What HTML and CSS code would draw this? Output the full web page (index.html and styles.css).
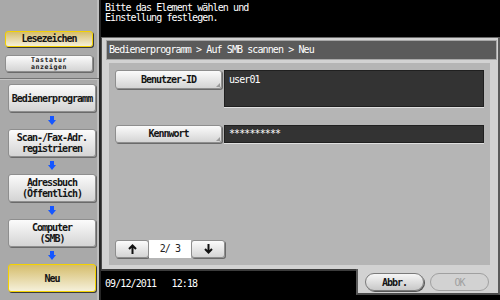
FILE: index.html
```html
<!DOCTYPE html>
<html lang="de">
<head>
	<meta charset="utf-8" />
	<title>Auf SMB scannen - Neu</title>
	<link rel="stylesheet" href="styles.css">
</head>
<body>
	<div class="screen">
		<aside class="side">
			<div class="side-top">
				<button class="btn hot mark">Lesezeichen</button>
				<button class="btn kbd">Tastatur<br/>anzeigen</button>
			</div>
			<div class="flow">
				<button class="btn step">Bedienerprogramm</button>
				<svg class="down" viewBox="0 0 8 9"><path d="M2 0h4v4h2L4 9L0 4h2z"/></svg>
				<button class="btn step">Scan-/Fax-Adr.<br/>registrieren</button>
				<svg class="down" viewBox="0 0 8 9"><path d="M2 0h4v4h2L4 9L0 4h2z"/></svg>
				<button class="btn step">Adressbuch<br/>(Öffentlich)</button>
				<svg class="down" viewBox="0 0 8 9"><path d="M2 0h4v4h2L4 9L0 4h2z"/></svg>
				<button class="btn step">Computer<br/>(SMB)</button>
				<svg class="down" viewBox="0 0 8 9"><path d="M2 0h4v4h2L4 9L0 4h2z"/></svg>
				<button class="btn step hot">Neu</button>
			</div>
		</aside>

		<main class="work">
			<div class="msg">Bitte das Element wählen und<br/>Einstellung festlegen.</div>

			<section class="panel">
				<div class="crumb">Bedienerprogramm &gt; Auf SMB scannen &gt; Neu</div>
				<div class="content">
					<div class="row">
						<button class="btn key">Benutzer-ID</button>
						<div class="field tall">user01</div>
					</div>
					<div class="row pw">
						<button class="btn key">Kennwort</button>
						<div class="field">**********</div>
					</div>
					<div class="pager">
						<button class="btn pg">
							<svg viewBox="0 0 9 10"><path d="M4.5 1.5V10M1 5l3.5-3.5L8 5"/></svg>
						</button>
						<span class="page">2/ 3</span>
						<button class="btn pg">
							<svg viewBox="0 0 9 10"><path d="M4.5 0v8.5M1 5l3.5 3.5L8 5"/></svg>
						</button>
					</div>
				</div>
			</section>

			<div class="foot">
				<div class="status">09/12/2011&nbsp;&nbsp;&nbsp;12:18</div>
				<div class="actions">
					<button class="pill">Abbr.</button>
					<button class="pill off">OK</button>
				</div>
			</div>
		</main>
	</div>
</body>
</html>
```

FILE: styles.css
```css
body
{
	margin: 0;
	background-color: black;
	font-family: "DejaVu Sans Mono", monospace;
}

.screen
{
	display: grid;
	grid-template-columns: 101px 1fr;
	width: 500px;
	height: 300px;
	overflow: hidden;
}

/* left column */

.side
{
	background-color: #a9a9a9;
	border-right: 2px solid #262626;
	box-shadow: inset -2px 0 #bebebe;
	display: flex;
	flex-direction: column;
}

.side-top
{
	height: 47px;
	padding-top: 31px;
	display: flex;
	flex-direction: column;
	gap: 8px;
	border-bottom: 1px solid #747474;
}

.flow
{
	border-top: 1px solid #c4c4c4;
	padding-top: 4px;
	display: flex;
	flex-direction: column;
	align-items: center;
}

.btn
{
	font-family: "DejaVu Sans Mono", monospace;
	font-weight: bold;
	font-size: 10px;
	line-height: 10px;
	letter-spacing: -1px;
	color: #151515;
	background: linear-gradient(#fbfbfb, #d4d4d4);
	border: 1px solid #8e8e8e;
	border-radius: 3px;
	box-shadow: 1px 1px 0 #6a6a6a;
	padding: 0;
	margin: 0;
}

.side .btn
{
	width: 88px;
	margin-left: 5px;
}

.mark
{
	height: 16px;
}

.kbd
{
	height: 17px;
	font-size: 6.5px;
	line-height: 7px;
	letter-spacing: 0.6px;
}

.step
{
	height: 28px;
	line-height: 11px;
}

.hot
{
	border-color: #f4d200;
	background: linear-gradient(#d5bd6c, #f5f0da);
	box-shadow: 1px 1px 0 #3a3a3a;
}

.down
{
	width: 8px;
	height: 9px;
	margin: 4px 0 4px 5px;
	fill: #1556ff;
}

/* right side */

.work
{
	display: flex;
	flex-direction: column;
}

.msg
{
	height: 31px;
	padding: 3px 4px;
	color: white;
	font-size: 10px;
	line-height: 10px;
	letter-spacing: -0.9px;
}

.panel
{
	height: 229px;
	background-color: #d2d2d2;
	border-left: 1px solid #4a4a4a;
	border-right: 2px solid #5a5a5a;
	border-top: 1px solid #6a6a6a;
	padding: 2px 1px 0 4px;
}

.crumb
{
	height: 18px;
	background-color: #5a5a5a;
	border: 1px solid #a8a8a8;
	color: white;
	font-size: 10px;
	line-height: 18px;
	letter-spacing: -0.9px;
	padding-left: 2px;
}

.content
{
	height: 188px;
	margin: 3px 7px 0 3px;
	background-color: #b5b5b5;
	padding: 7px 6px;
	display: flex;
	flex-direction: column;
}

.row
{
	display: grid;
	grid-template-columns: 107px 1fr;
	gap: 2px;
	align-items: start;
}

.pw
{
	margin-top: 18px;
}

.key
{
	height: 19px;
	position: relative;
}

.key::after
{
	content: "";
	position: absolute;
	right: 1px;
	bottom: 1px;
	border-left: 4px solid transparent;
	border-bottom: 4px solid #9a9a9a;
}

.pw .key
{
	height: 18px;
}

.field
{
	height: 16px;
	background-color: #333333;
	border: 1px solid #202020;
	box-shadow: 0 1px 0 #e0e0e0;
	color: white;
	font-size: 10px;
	line-height: 15px;
	letter-spacing: -0.9px;
	padding-left: 4px;
}

.field.tall
{
	height: 35px;
	line-height: 18px;
}

.pager
{
	margin-top: auto;
	display: flex;
	height: 18px;
}

.pg
{
	width: 34px;
	height: 18px;
	display: flex;
	align-items: center;
	justify-content: center;
}

.pg svg
{
	width: 9px;
	height: 10px;
	fill: none;
	stroke: #111;
	stroke-width: 2;
}

.page
{
	width: 42px;
	background-color: white;
	font-size: 10px;
	line-height: 18px;
	letter-spacing: -0.9px;
	text-align: center;
	color: #222;
}

.foot
{
	flex: 1;
	display: flex;
}

.status
{
	flex: 1;
	border-top: 2px solid #3c3c3c;
	color: white;
	font-size: 10px;
	letter-spacing: -0.9px;
	padding: 7px 4px 0 4px;
}

.actions
{
	width: 144px;
	height: 26px;
	box-sizing: border-box;
	background-color: #d2d2d2;
	border-left: 2px solid #5a5a5a;
	border-right: 2px solid #5a5a5a;
	border-bottom: 2px solid #4a4a4a;
	display: flex;
	gap: 6px;
	padding: 4px 0 0 7px;
}

.pill
{
	width: 59px;
	height: 18px;
	border-radius: 9px;
	border: 1px solid #7a7a7a;
	background: linear-gradient(#f6f6f6, #c8c8c8);
	box-shadow: 1px 1px 0 #555;
	font-family: "DejaVu Sans Mono", monospace;
	font-weight: bold;
	font-size: 10px;
	letter-spacing: -1px;
	color: #151515;
	padding: 0;
}

.pill.off
{
	background: #d2d2d2;
	border-color: #a0a0a0;
	box-shadow: none;
	color: #a0a0a0;
	font-weight: normal;
}
```
